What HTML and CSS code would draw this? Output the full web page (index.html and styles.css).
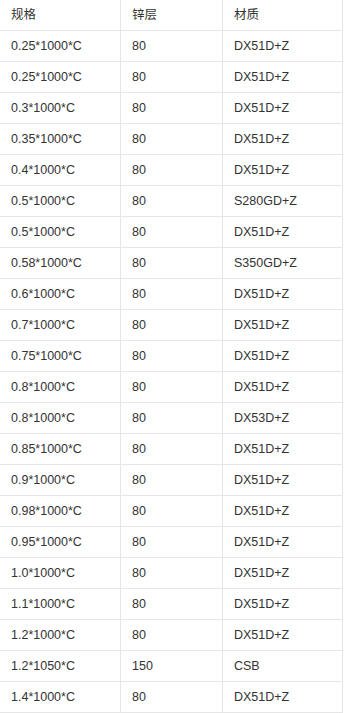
FILE: index.html
```html
<!DOCTYPE html>
<html lang="zh">
<head>
<meta charset="utf-8">
<link rel="stylesheet" href="styles.css">
</head>
<body>
<table class="spec">
<colgroup><col class="c1"><col class="c2"><col class="c3"></colgroup>
<tbody>
<tr><td>规格</td><td>锌层</td><td>材质</td></tr>
<tr><td>0.25*1000*C</td><td>80</td><td>DX51D+Z</td></tr>
<tr><td>0.25*1000*C</td><td>80</td><td>DX51D+Z</td></tr>
<tr><td>0.3*1000*C</td><td>80</td><td>DX51D+Z</td></tr>
<tr><td>0.35*1000*C</td><td>80</td><td>DX51D+Z</td></tr>
<tr><td>0.4*1000*C</td><td>80</td><td>DX51D+Z</td></tr>
<tr><td>0.5*1000*C</td><td>80</td><td>S280GD+Z</td></tr>
<tr><td>0.5*1000*C</td><td>80</td><td>DX51D+Z</td></tr>
<tr><td>0.58*1000*C</td><td>80</td><td>S350GD+Z</td></tr>
<tr><td>0.6*1000*C</td><td>80</td><td>DX51D+Z</td></tr>
<tr><td>0.7*1000*C</td><td>80</td><td>DX51D+Z</td></tr>
<tr><td>0.75*1000*C</td><td>80</td><td>DX51D+Z</td></tr>
<tr><td>0.8*1000*C</td><td>80</td><td>DX51D+Z</td></tr>
<tr><td>0.8*1000*C</td><td>80</td><td>DX53D+Z</td></tr>
<tr><td>0.85*1000*C</td><td>80</td><td>DX51D+Z</td></tr>
<tr><td>0.9*1000*C</td><td>80</td><td>DX51D+Z</td></tr>
<tr><td>0.98*1000*C</td><td>80</td><td>DX51D+Z</td></tr>
<tr><td>0.95*1000*C</td><td>80</td><td>DX51D+Z</td></tr>
<tr><td>1.0*1000*C</td><td>80</td><td>DX51D+Z</td></tr>
<tr><td>1.1*1000*C</td><td>80</td><td>DX51D+Z</td></tr>
<tr><td>1.2*1000*C</td><td>80</td><td>DX51D+Z</td></tr>
<tr><td>1.2*1050*C</td><td>150</td><td>CSB</td></tr>
<tr><td>1.4*1000*C</td><td>80</td><td>DX51D+Z</td></tr>
</tbody>
</table>
</body>
</html>
```

FILE: styles.css
```css
html, body {
  margin: 0;
  padding: 0;
  background: #fff;
}
.spec {
  border-collapse: separate;
  border-spacing: 0;
  table-layout: fixed;
  width: 343px;
  font-family: "Liberation Sans", Arial, "Noto Sans CJK SC", sans-serif;
  font-size: 12.5px;
  color: #333;
}
.c1 { width: 121px; }
.c2 { width: 102px; }
.c3 { width: 120px; }
.spec td {
  box-sizing: border-box;
  height: 31px;
  padding: 1px 0 0 11px;
  line-height: 29px;
  border-right: 1px solid #e6e6e6;
  border-bottom: 1px solid #e6e6e6;
  white-space: nowrap;
  vertical-align: middle;
}
```
